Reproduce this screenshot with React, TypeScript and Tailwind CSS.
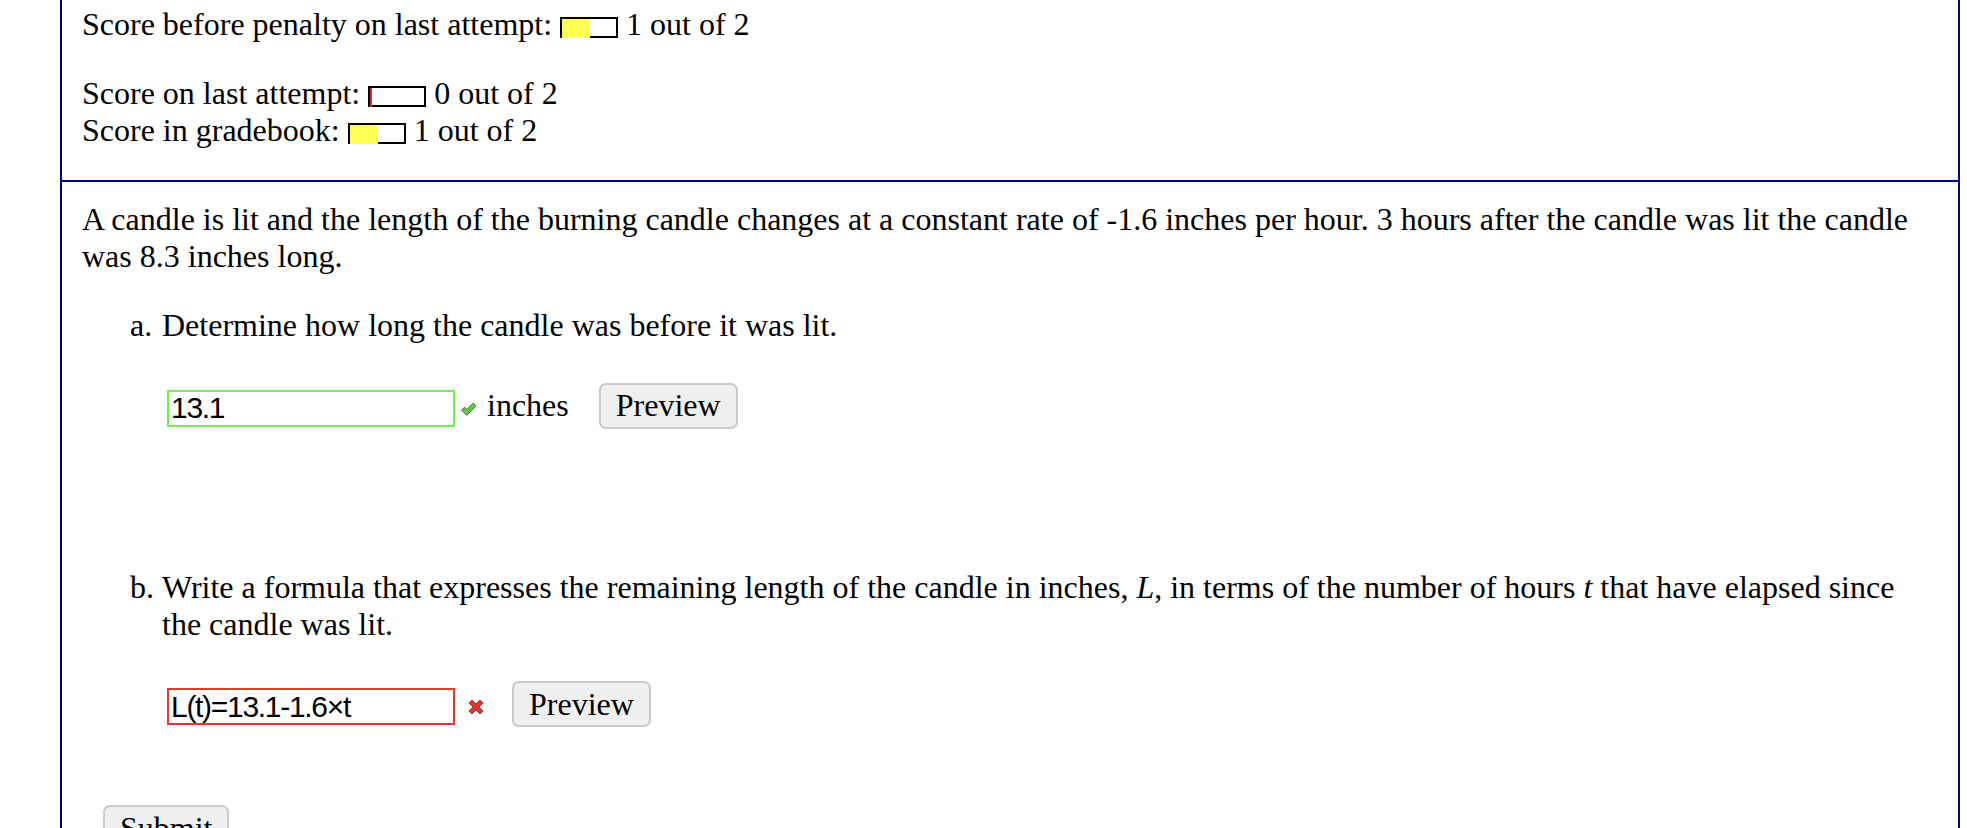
import React from "react";

const ScoreBar: React.FC<{ filled: boolean }> = ({ filled }) => (
  <span className="inline-flex h-[21px] w-[58px] items-start border-2 border-black align-middle">
    {filled ? (
      <span className="block h-[19px] w-[28px] bg-[#ffff55]" />
    ) : (
      <span className="block h-[19px] w-[2px] bg-[#e0301e]" />
    )}
  </span>
);

const CheckIcon = () => (
  <svg width="17" height="15" viewBox="0 0 14 13">
    <path
      d="M1 7 L3.5 4.5 L5.5 6.5 L11 1 L13.5 3.5 L5.5 11.5 Z"
      fill="#5fd03c"
      stroke="#4a4a4a"
      strokeWidth="0.8"
      strokeLinejoin="round"
    />
  </svg>
);

const CrossIcon = () => (
  <svg width="16" height="16" viewBox="0 0 16 16">
    <path
      d="M1 4 L4 1 L8 5 L12 1 L15 4 L11 8 L15 12 L12 15 L8 11 L4 15 L1 12 L5 8 Z"
      fill="#e8352b"
      stroke="#7c2418"
      strokeWidth="0.8"
      strokeLinejoin="round"
    />
  </svg>
);

const PreviewButton: React.FC<{ label?: string; className?: string }> = ({ label = "Preview", className = "" }) => (
  <button
    className={`h-[46px] shrink-0 rounded-[7px] border-2 border-[#cacaca] bg-[#efefef] px-[15px] text-[32px] leading-[36.8px] text-black ${className}`}
  >
    {label}
  </button>
);

const AnswerInput: React.FC<{ value: string; tone: "good" | "bad" }> = ({ value, tone }) => (
  <input
    readOnly
    value={value}
    className={`mt-[5px] h-[37px] w-[288px] shrink-0 border-2 bg-white pl-[2px] font-['Liberation_Sans',Arial,sans-serif] text-[30px] leading-none tracking-[-1.3px] text-black outline-none ${
      tone === "good" ? "border-[#6ff04f]" : "border-[#e5382b]"
    }`}
  />
);

export default function App() {
  return (
    <div className="h-[828px] overflow-hidden bg-white font-['Liberation_Serif','Times_New_Roman',serif] text-[32px] leading-[36.8px] text-black">
      <div className="ml-[60px] h-full w-[1900px] border-x-2 border-[#000080]">
        {/* score summary */}
        <div className="border-b-2 border-[#000080] pb-[32px] pl-[20px] pt-[6px]">
          <p>
            Score before penalty on last attempt: <ScoreBar filled /> 1 out of 2
          </p>
          <p className="mt-[32px]">
            Score on last attempt: <ScoreBar filled={false} /> 0 out of 2
            <br />
            Score in gradebook: <ScoreBar filled /> 1 out of 2
          </p>
        </div>

        {/* question */}
        <div className="px-[20px] pt-[19px]">
          <p>
            A candle is lit and the length of the burning candle changes at a constant rate of -1.6 inches per hour. 3
            hours after the candle was lit the candle was 8.3 inches long.
          </p>

          <div className="mt-[32px] flex">
            <span className="w-[80px] shrink-0 pl-[48px]">a.</span>
            <div className="flex-1">
              <div>Determine how long the candle was before it was lit.</div>
              <div className="mt-[39px] flex h-[46px] items-center pl-[5px]">
                <AnswerInput value="13.1" tone="good" />
                <span className="ml-[5px] mt-[8px]">
                  <CheckIcon />
                </span>
                <span className="mb-[1px] ml-[10px]">inches</span>
                <PreviewButton className="ml-[30px]" />
              </div>
            </div>
          </div>

          <div className="mt-[140px] flex">
            <span className="w-[80px] shrink-0 pl-[48px]">b.</span>
            <div className="flex-1">
              <div>
                Write a formula that expresses the remaining length of the candle in inches, <i>L</i>, in terms of the
                number of hours <i>t</i> that have elapsed since the candle was lit.
              </div>
              <div className="mt-[39px] flex h-[46px] items-center pl-[5px]">
                <AnswerInput value="L(t)=13.1-1.6×t" tone="bad" />
                <span className="ml-[13px] mt-[6px]">
                  <CrossIcon />
                </span>
                <PreviewButton className="ml-[28px]" />
              </div>
            </div>
          </div>

          <PreviewButton label="Submit" className="ml-[21px] mt-[78px]" />
        </div>
      </div>
    </div>
  );
}
